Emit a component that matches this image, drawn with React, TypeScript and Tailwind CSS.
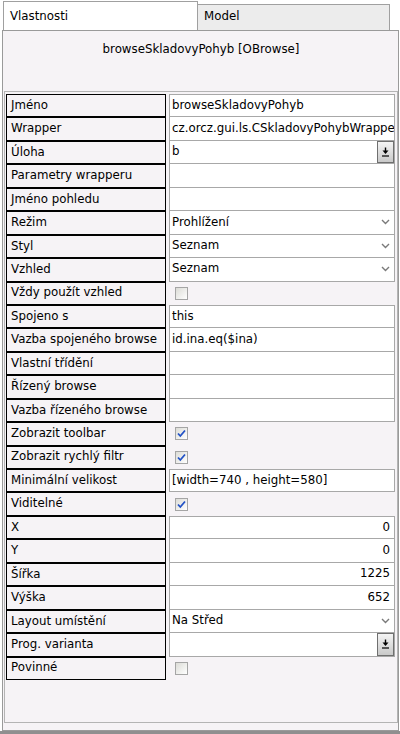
import React from "react";

type Kind = "text" | "select" | "button" | "check" | "empty" | "num";
type Row = { label: string; kind: Kind; value?: string; checked?: boolean };

const rows: Row[] = [
  { label: "Jméno", kind: "text", value: "browseSkladovyPohyb" },
  { label: "Wrapper", kind: "text", value: "cz.orcz.gui.ls.CSkladovyPohybWrapper" },
  { label: "Úloha", kind: "button", value: "b" },
  { label: "Parametry wrapperu", kind: "empty" },
  { label: "Jméno pohledu", kind: "empty" },
  { label: "Režim", kind: "select", value: "Prohlížení" },
  { label: "Styl", kind: "select", value: "Seznam" },
  { label: "Vzhled", kind: "select", value: "Seznam" },
  { label: "Vždy použít vzhled", kind: "check", checked: false },
  { label: "Spojeno s", kind: "text", value: "this" },
  { label: "Vazba spojeného browse", kind: "text", value: "id.ina.eq($ina)" },
  { label: "Vlastní třídění", kind: "empty" },
  { label: "Řízený browse", kind: "empty" },
  { label: "Vazba řízeného browse", kind: "empty" },
  { label: "Zobrazit toolbar", kind: "check", checked: true },
  { label: "Zobrazit rychlý filtr", kind: "check", checked: true },
  { label: "Minimální velikost", kind: "text", value: "[width=740 , height=580]" },
  { label: "Viditelné", kind: "check", checked: true },
  { label: "X", kind: "num", value: "0" },
  { label: "Y", kind: "num", value: "0" },
  { label: "Šířka", kind: "num", value: "1225" },
  { label: "Výška", kind: "num", value: "652" },
  { label: "Layout umístění", kind: "select", value: "Na Střed" },
  { label: "Prog. varianta", kind: "button", value: "" },
  { label: "Povinné", kind: "check", checked: false },
];

function Checkbox({ checked }: { checked?: boolean }) {
  return (
    <div className="ml-[6px] h-[13px] w-[13px] border border-[#a5a5a5] bg-gradient-to-br from-[#dcdcd7] to-white flex items-center justify-center">
      {checked && (
        <svg width="9" height="9" viewBox="0 0 9 9">
          <path d="M1 4.5 L3.3 7 L8 1.5" stroke="#2151c6" strokeWidth="1.8" fill="none" />
        </svg>
      )}
    </div>
  );
}

function Chevron() {
  return (
    <svg width="9" height="6" viewBox="0 0 9 6" className="mr-[4px] shrink-0">
      <path d="M1 1 L4.5 4.5 L8 1" stroke="#7a7a7a" strokeWidth="1.4" fill="none" />
    </svg>
  );
}

function PickButton() {
  return (
    <div className="h-full w-[17px] shrink-0 border border-[#6f6f6f] bg-gradient-to-b from-[#f4f4f4] to-[#c9c9c9] flex items-center justify-center">
      <svg width="9" height="10" viewBox="0 0 9 10">
        <path d="M4.5 0.5 V4" stroke="#000" strokeWidth="1.4" />
        <path d="M1.5 3.5 H7.5 L4.5 7 Z" fill="#000" />
        <path d="M1 9 H8" stroke="#000" strokeWidth="1.2" />
      </svg>
    </div>
  );
}

function Value({ row, prevField }: { row: Row; prevField: boolean }) {
  if (row.kind === "check") {
    return (
      <div className="flex-1 flex items-center">
        <Checkbox checked={row.checked} />
      </div>
    );
  }
  return (
    <div
      className={
        "flex-1 min-w-0 bg-white border-x border-b border-[#a8a8a8] flex items-center overflow-hidden whitespace-nowrap " +
        (prevField ? "border-t-0" : "border-t")
      }
    >
      {row.kind === "num" ? (
        <span className="flex-1 text-right pr-[4px]">{row.value}</span>
      ) : (
        <span className="flex-1 min-w-0 pl-[2px] overflow-hidden">{row.value}</span>
      )}
      {row.kind === "select" && <Chevron />}
      {row.kind === "button" && <PickButton />}
    </div>
  );
}

export default function App() {
  return (
    <div
      className="w-[400px] h-[734px] bg-white overflow-hidden text-[11.8px] text-black flex flex-col"
      style={{ fontFamily: '"DejaVu Sans", Tahoma, sans-serif' }}
    >
      <div className="h-[30px] flex pl-[3px] shrink-0">
        <div className="mt-[1px] h-[29px] w-[195px] bg-white border border-b-0 border-[#a0a0a0] pl-[6px] pt-[6px]">
          Vlastnosti
        </div>
        <div className="mt-[4px] h-[26px] w-[192px] bg-[#ececec] border border-l-0 border-b-0 border-[#a0a0a0] pl-[6px] pt-[3px]">
          Model
        </div>
      </div>
      <div className="ml-[2px] w-[397px] h-[701px] shrink-0 border border-[#9a9a9a] bg-[#f6f3f6] pl-[1px] pb-[7px] flex flex-col">
        <div className="h-[60px] shrink-0 text-center pt-[10px]">browseSkladovyPohyb [OBrowse]</div>
        <div className="flex-1 min-w-0 border border-[#b4b4b4] pl-[1px] pr-[2px] pt-[2px]">
          <div className="h-[586px] grid grid-cols-1 grid-rows-[repeat(25,minmax(0,1fr))]">
            {rows.map((r, i) => {
              const prev = rows[i - 1];
              const prevField = !!prev && prev.kind !== "check";
              return (
                <div key={r.label} className="flex min-h-0 min-w-0">
                  <div className="w-[160px] shrink-0 border border-black pl-[4px] flex items-center whitespace-nowrap overflow-hidden">
                    {r.label}
                  </div>
                  <div className="w-[3px] shrink-0" />
                  <Value row={r} prevField={prevField} />
                </div>
              );
            })}
          </div>
        </div>
      </div>
      <div className="flex-1 bg-[#8f8f8f]" />
    </div>
  );
}
